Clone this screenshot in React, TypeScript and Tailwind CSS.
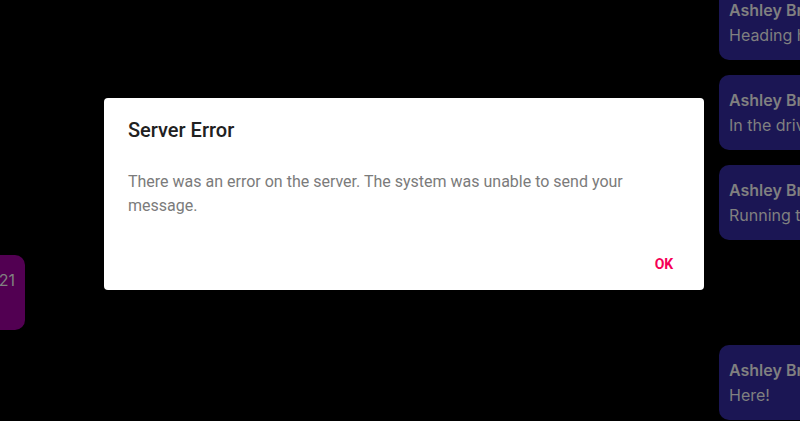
type Message = { text: string; author?: string; mine?: boolean };

const messages: Message[] = [
  { author: "Ashley Brown", text: "Heading home" },
  { author: "Ashley Brown", text: "In the driveway" },
  { author: "Ashley Brown", text: "Running to the store" },
  { text: "21", mine: true },
  { author: "Ashley Brown", text: "Here!" },
];

function Bubble({ message }: { message: Message }) {
  if (message.mine) {
    return (
      <li className="h-[75px] w-[25px] self-start rounded-r-[10px] bg-[#520052] py-[13px] pr-[10px] text-right">
        <p className="flex justify-end">{message.text}</p>
      </li>
    );
  }
  return (
    <li className="-mr-20 h-[75px] w-[161px] self-end rounded-[10px] bg-[#1b1654] px-[10px] py-[13px] whitespace-nowrap">
      <p className="font-semibold">{message.author}</p>
      <p>{message.text}</p>
    </li>
  );
}

export default function App() {
  return (
    <div className="relative h-screen overflow-hidden bg-black">
      <ul className="-mt-[15px] flex flex-col gap-[15px] font-['Inter',sans-serif] text-base leading-[25px] text-[#808080]">
        {messages.map((message, index) => (
          <Bubble key={index} message={message} />
        ))}
      </ul>
      <div className="absolute inset-0 flex items-start justify-center pt-[98px] pl-2">
        <div
          role="alertdialog"
          aria-labelledby="dialog-title"
          aria-describedby="dialog-text"
          className="w-full max-w-[600px] rounded bg-white font-['Roboto',sans-serif]"
        >
          <h2 id="dialog-title" className="px-6 pt-4 text-xl leading-8 font-medium text-[#212121]">
            Server Error
          </h2>
          <p id="dialog-text" className="px-6 pt-6 text-base leading-6 text-[#7b7b7b]">
            There was an error on the server. The system was unable to send your message.
          </p>
          <div className="flex justify-end px-2 pt-7 pb-2">
            <button type="button" className="h-9 w-16 text-sm font-bold text-[#f50057]">
              OK
            </button>
          </div>
        </div>
      </div>
    </div>
  );
}
